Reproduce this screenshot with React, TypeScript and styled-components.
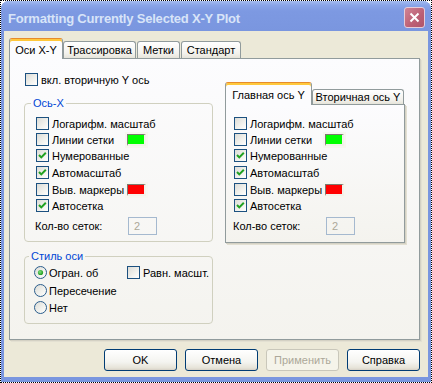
import styled, { createGlobalStyle } from "styled-components";

const Global = createGlobalStyle`
  html, body {
    margin: 0;
    padding: 0;
    background: #fff;
  }
  body {
    font-family: "Liberation Sans", Arial, sans-serif;
    font-size: 11px;
    color: #000;
  }
`;

const Screen = styled.div`
  width: 432px;
  height: 383px;
  box-sizing: border-box;
  border: 1px dotted #000;
  display: flex;
`;

const Frame = styled.div`
  flex: 1;
  display: flex;
  flex-direction: column;
  background: #7a96df;
  border-radius: 8px 8px 0 0;
  overflow: hidden;
`;

const TitleBar = styled.div`
  height: 30px;
  flex: none;
  display: flex;
  align-items: flex-start;
  justify-content: space-between;
  padding: 0 6px 0 7px;
  background: linear-gradient(#a5bdf1 0px, #8aa5e8 4px, #7d99e2 10px, #7a96df 100%);
`;

const Title = styled.span`
  margin-top: 10px;
  font-family: "Liberation Sans", Arial, sans-serif;
  font-weight: bold;
  font-size: 13px;
  letter-spacing: -0.2px;
  color: #d8e4f8;
  white-space: nowrap;
`;

const CloseButton = styled.div`
  margin-top: 6px;
  width: 21px;
  height: 21px;
  box-sizing: border-box;
  border: 1px solid #e6ccd8;
  border-radius: 3px;
  background: linear-gradient(135deg, #d08494, #bc5f74 60%, #b05468);
  display: flex;
  align-items: center;
  justify-content: center;
`;

const Body = styled.div`
  flex: 1;
  margin: 0 3px 5px 3px;
  background: #ece9d8;
  padding: 7px 8px 5px 5px;
  display: flex;
  flex-direction: column;
`;

const TabStrip = styled.div<{ $h: number }>`
  height: ${(p) => p.$h}px;
  display: flex;
  align-items: flex-end;
  gap: 1px;
  position: relative;
  z-index: 1;
`;

const Tab = styled.div<{ $active?: boolean; $w: number; $h: number }>`
  width: ${(p) => p.$w}px;
  height: ${(p) => p.$h}px;
  box-sizing: border-box;
  flex: none;
  display: flex;
  align-items: center;
  justify-content: center;
  white-space: nowrap;
  border: 1px solid #919b9c;
  border-bottom: none;
  border-radius: 3px 3px 0 0;
  background: ${(p) => (p.$active ? "#fcfcfe" : "linear-gradient(#ffffff, #f3f2ed 70%, #e6e4da)")};
  ${(p) =>
    p.$active &&
    `
    margin-right: -1px;
    margin-bottom: -1px;
    border-top: 1px solid #e68b2c;
    box-shadow: inset 0 2px 0 #ffc83c;
    padding-top: 2px;
  `}
`;

const TabPanel = styled.div<{ $h: number }>`
  height: ${(p) => p.$h}px;
  box-sizing: border-box;
  border: 1px solid #919b9c;
  background: linear-gradient(#fcfcfe, #f4f3ee);
  box-shadow: 1px 1px 0 #d4d1c4, 2px 2px 0 #e3e0d2;
`;

const MainContent = styled.div`
  display: flex;
  gap: 12px;
  padding-left: 14px;
`;

const LeftColumn = styled.div`
  width: 189px;
  padding-top: 14px;
  display: flex;
  flex-direction: column;
`;

const RightColumn = styled.div`
  width: 180px;
  padding-top: 23px;
  display: flex;
  flex-direction: column;
`;

const Group = styled.fieldset<{ $gap: number; $pad: string }>`
  margin: ${(p) => p.$gap}px 0 0 0;
  padding: ${(p) => p.$pad};
  border: 1px solid #d0d0bf;
  border-radius: 4px;
  min-width: 0;
  box-sizing: border-box;
`;

const Legend = styled.legend`
  color: #0046d5;
  padding: 0 2px;
  margin-left: -5px;
  line-height: 13px;
`;

const Rows = styled.div`
  display: grid;
  grid-template-rows: 16px 16px 17px 17px 16px 18px 18px;
  align-items: start;
`;

const Row = styled.div`
  display: flex;
  align-items: center;
  height: 13px;
`;

const FieldRow = styled.div`
  display: flex;
  align-items: center;
  height: 18px;
  margin-left: -1px;
`;

const Check = styled.label<{ $w?: number; $gap?: number }>`
  display: flex;
  align-items: center;
  gap: ${(p) => p.$gap ?? 3}px;
  width: ${(p) => (p.$w ? `${p.$w}px` : "auto")};
  flex: none;
  white-space: nowrap;
`;

const Box = styled.span<{ $round?: boolean }>`
  width: 13px;
  height: 13px;
  box-sizing: border-box;
  flex: none;
  border: 1px solid ${(p) => (p.$round ? "#2a5d8c" : "#1c5180")};
  border-radius: ${(p) => (p.$round ? "50%" : "0")};
  background: linear-gradient(135deg, #dcdcd7, #f2f2ee 60%, #ffffff);
  display: flex;
  align-items: center;
  justify-content: center;
`;

const Swatch = styled.span<{ $color: string }>`
  width: 19px;
  height: 12px;
  box-sizing: border-box;
  border-top: 1px solid #7d7b70;
  border-left: 1px solid #7d7b70;
  border-right: 2px solid #f3f2ea;
  border-bottom: 2px solid #f3f2ea;
  background: ${(p) => p.$color};
  outline: 2px solid #f7f6f0;
`;

const FieldLabel = styled.span`
  width: 93px;
  flex: none;
`;

const NumberBox = styled.span`
  width: 29px;
  height: 18px;
  box-sizing: border-box;
  border: 1px solid #a5b9cf;
  color: #aca899;
  padding-left: 5px;
  display: flex;
  align-items: center;
`;

const RadioRows = styled.div`
  display: grid;
  grid-template-columns: 93px auto;
  grid-template-rows: 18px 17px 13px;
  align-items: start;
`;

const InnerPanelBody = styled.div`
  padding: 12px 0 0 8px;
`;

const ButtonRow = styled.div`
  margin-top: 9px;
  display: flex;
  justify-content: flex-end;
  gap: 8px;
`;

const Button = styled.button`
  width: 73px;
  height: 22px;
  box-sizing: border-box;
  padding: 0;
  font-family: "Liberation Sans", Arial, sans-serif;
  font-size: 11px;
  color: #000;
  border: 1px solid #003c74;
  border-radius: 3px;
  background: linear-gradient(#ffffff, #f4f4f0 60%, #e6e3d8 90%, #d6d0c5);
  &:disabled {
    color: #aca899;
    border-color: #c9c7ba;
    background: #f5f4ea;
  }
`;

function CheckMark() {
  return (
    <svg width="11" height="11" viewBox="0 0 11 11">
      <path d="M2 5 L4.3 7.4 L8.8 2.8" fill="none" stroke="#21a121" strokeWidth="2" />
    </svg>
  );
}

function RadioDot() {
  return (
    <svg width="11" height="11" viewBox="0 0 11 11">
      <defs>
        <radialGradient id="dot" cx="0.4" cy="0.4" r="0.6">
          <stop offset="0" stopColor="#7fe07f" />
          <stop offset="1" stopColor="#1f9c1f" />
        </radialGradient>
      </defs>
      <circle cx="5.5" cy="5.5" r="2.6" fill="url(#dot)" />
    </svg>
  );
}

function CheckBox({ label, checked, w }: { label: string; checked?: boolean; w?: number }) {
  return (
    <Check $w={w}>
      <Box>{checked && <CheckMark />}</Box>
      {label}
    </Check>
  );
}

function Radio({ label, checked }: { label: string; checked?: boolean }) {
  return (
    <Check $gap={2}>
      <Box $round>{checked && <RadioDot />}</Box>
      {label}
    </Check>
  );
}

function AxisRows() {
  return (
    <Rows>
      <Row>
        <CheckBox label="Логарифм. масштаб" />
      </Row>
      <Row>
        <CheckBox label="Линии сетки" w={91} />
        <Swatch $color="#00ff00" />
      </Row>
      <Row>
        <CheckBox label="Нумерованные" checked />
      </Row>
      <Row>
        <CheckBox label="Автомасштаб" checked />
      </Row>
      <Row>
        <CheckBox label="Выв. маркеры" w={91} />
        <Swatch $color="#ff0000" />
      </Row>
      <Row>
        <CheckBox label="Автосетка" checked />
      </Row>
      <FieldRow>
        <FieldLabel>Кол-во сеток:</FieldLabel>
        <NumberBox>2</NumberBox>
      </FieldRow>
    </Rows>
  );
}

export default function App() {
  return (
    <>
      <Global />
      <Screen>
        <Frame>
          <TitleBar>
            <Title>Formatting Currently Selected X-Y Plot</Title>
            <CloseButton>
              <svg width="11" height="11" viewBox="0 0 11 11">
                <path d="M1.5 1.5 L9.5 9.5 M9.5 1.5 L1.5 9.5" stroke="#fff" strokeWidth="2" />
              </svg>
            </CloseButton>
          </TitleBar>
          <Body>
            <TabStrip $h={20}>
              <Tab $active $w={54} $h={21}>
                Оси X-Y
              </Tab>
              <Tab $w={73} $h={17}>
                Трассировка
              </Tab>
              <Tab $w={43} $h={17}>
                Метки
              </Tab>
              <Tab $w={60} $h={17}>
                Стандарт
              </Tab>
            </TabStrip>
            <TabPanel $h={282}>
              <MainContent>
                <LeftColumn>
                  <Row style={{ marginLeft: 1 }}>
                    <CheckBox label="вкл. вторичную Y ось" />
                  </Row>
                  <Group $gap={11} $pad="7px 0 6px 11px">
                    <Legend>Ось-X</Legend>
                    <AxisRows />
                  </Group>
                  <Group $gap={8} $pad="3px 0 9px 9px">
                    <Legend>Стиль оси</Legend>
                    <RadioRows>
                      <Radio label="Огран. об" checked />
                      <CheckBox label="Равн. масшт." />
                      <Radio label="Пересечение" />
                      <span />
                      <Radio label="Нет" />
                    </RadioRows>
                  </Group>
                </LeftColumn>
                <RightColumn>
                  <TabStrip $h={22}>
                    <Tab $active $w={87} $h={23}>
                      Главная ось Y
                    </Tab>
                    <Tab $w={92} $h={15}>
                      Вторичная ось Y
                    </Tab>
                  </TabStrip>
                  <TabPanel $h={139}>
                    <InnerPanelBody>
                      <AxisRows />
                    </InnerPanelBody>
                  </TabPanel>
                </RightColumn>
              </MainContent>
            </TabPanel>
            <ButtonRow>
              <Button>OK</Button>
              <Button>Отмена</Button>
              <Button disabled>Применить</Button>
              <Button>Справка</Button>
            </ButtonRow>
          </Body>
        </Frame>
      </Screen>
    </>
  );
}
